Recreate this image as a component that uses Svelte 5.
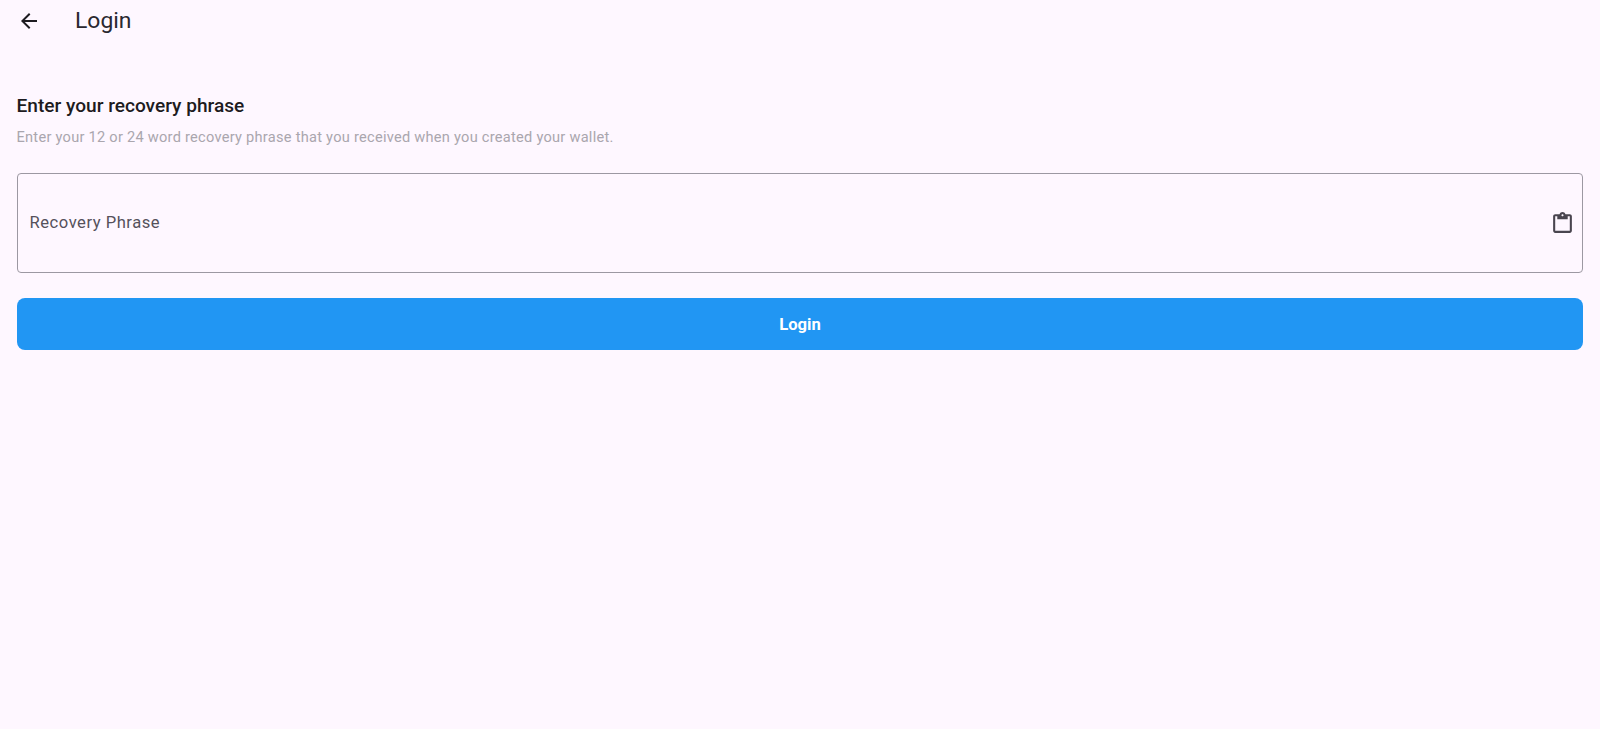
<script>
  let phrase = $state('');
</script>

<div class="page">
  <header class="bar">
    <button class="back" aria-label="Back">
      <svg width="24" height="24" viewBox="0 0 24 24"><path d="M20 11H7.83l5.59-5.59L12 4l-8 8 8 8 1.41-1.41L7.83 13H20v-2z" /></svg>
    </button>
    <h1>Login</h1>
  </header>
  <main class="content">
    <h2>Enter your recovery phrase</h2>
    <p>Enter your 12 or 24 word recovery phrase that you received when you created your wallet.</p>
    <label class="field">
      <input bind:value={phrase} placeholder="Recovery Phrase" />
      <svg width="25" height="25" viewBox="0 0 24 24"><path d="M19 3h-4.18C14.4 1.84 13.3 1 12 1s-2.4.84-2.82 2H5c-1.1 0-2 .9-2 2v14c0 1.1.9 2 2 2h14c1.1 0 2-.9 2-2V5c0-1.1-.9-2-2-2zm-7 0c.55 0 1 .45 1 1s-.45 1-1 1-1-.45-1-1 .45-1 1-1zm7 16H5V5h2v3h10V5h2v14z" /></svg>
    </label>
    <button class="login">Login</button>
  </main>
</div>

<style>
  :global(body) {
    margin: 0;
    background: #fef7ff;
  }
  .page {
    min-height: 729px;
    background: #fef7ff;
    color: #1d1b20;
    font-family: Roboto, sans-serif;
  }
  .bar {
    display: flex;
    align-items: center;
    height: 41px;
  }
  .back {
    display: flex;
    align-items: center;
    justify-content: center;
    width: 24px;
    height: 24px;
    margin-left: 17px;
    padding: 0;
    border: 0;
    background: none;
  }
  .back svg {
    fill: #1d1b20;
  }
  h1 {
    margin: 0 0 0 34px;
    font-size: 22.9px;
    font-weight: 400;
    line-height: 28px;
    color: #2a2830;
  }
  .content {
    display: flex;
    flex-direction: column;
    padding: 53px 17px 0 17px;
  }
  h2 {
    margin: 0 0 0 -0.5px;
    font-size: 19.1px;
    font-weight: 500;
    line-height: 24px;
    color: #1d1b20;
  }
  p {
    margin: 9px 0 0 -0.5px;
    font-size: 14.6px;
    line-height: 20px;
    letter-spacing: 0.26px;
    color: #aaa6ae;
  }
  .field {
    display: flex;
    align-items: center;
    box-sizing: border-box;
    height: 100px;
    margin-top: 26px;
    padding: 0 7px 0 11.5px;
    border: 1.5px solid #9c98a2;
    border-radius: 4px;
  }
  .field svg {
    flex: none;
    fill: #49454f;
  }
  input {
    flex: 1;
    min-width: 0;
    padding: 0;
    border: 0;
    outline: 0;
    background: none;
    font: 400 16.6px/24px Roboto, sans-serif;
    letter-spacing: 0.52px;
    color: #55515b;
  }
  input::placeholder {
    color: #55515b;
    opacity: 1;
  }
  .login {
    height: 52px;
    margin-top: 25px;
    padding: 1px 0 0;
    border: 0;
    border-radius: 8px;
    background: #2196f3;
    color: #fff;
    font: 700 16.6px/24px Roboto, sans-serif;
  }
</style>
